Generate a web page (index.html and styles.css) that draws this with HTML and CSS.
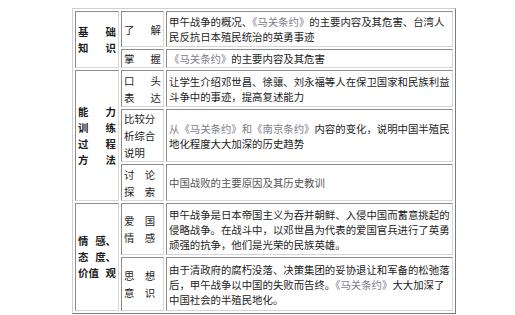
FILE: index.html
```html
<!DOCTYPE html>
<html lang="zh">
<head>
<meta charset="utf-8">
<link rel="stylesheet" href="styles.css">
</head>
<body>
<table class="plan">
  <tr class="r1">
    <td class="c1" rowspan="2"><div class="lbl"><span>基</span><span>础</span></div><div class="lbl"><span>知</span><span>识</span></div></td>
    <td class="c2"><div class="lbl"><span>了</span><span>解</span></div></td>
    <td class="c3">甲午战争的概况、<span class="g">《马关条约》</span>的主要内容及其危害、台湾人民反抗日本殖民统治的英勇事迹</td>
  </tr>
  <tr class="r2">
    <td class="c2"><div class="lbl"><span>掌</span><span>握</span></div></td>
    <td class="c3"><span class="g">《马关条约》</span>的主要内容及其危害</td>
  </tr>
  <tr class="r3 grp">
    <td class="c1" rowspan="3"><div class="lbl"><span>能</span><span>力</span></div><div class="lbl"><span>训</span><span>练</span></div><div class="lbl"><span>过</span><span>程</span></div><div class="lbl"><span>方</span><span>法</span></div></td>
    <td class="c2"><div class="lbl"><span>口</span><span>头</span></div><div class="lbl"><span>表</span><span>达</span></div></td>
    <td class="c3">让学生介绍邓世昌、徐骧、刘永福等人在保卫国家和民族利益斗争中的事迹，提高复述能力</td>
  </tr>
  <tr class="r4">
    <td class="c2">比较分<br>析综合<br>说明</td>
    <td class="c3"><span class="g">从《马关条约》和《南京条约》</span>内容的变化，说明中国半殖民地化程度大大加深的历史趋势</td>
  </tr>
  <tr class="r5">
    <td class="c2">讨　论<br>探　索</td>
    <td class="c3 soft">中国战败的主要原因及其历史教训</td>
  </tr>
  <tr class="r6 grp">
    <td class="c1" rowspan="2"><div class="lbl"><span>情</span><span>感、</span></div><div class="lbl"><span>态</span><span>度、</span></div><div class="lbl"><span>价值</span><span>观</span></div></td>
    <td class="c2">爱　国<br>情　感</td>
    <td class="c3">甲午战争是日本帝国主义为吞并朝鲜、入侵中国而蓄意挑起的侵略战争。在战斗中，以邓世昌为代表的爱国官兵进行了英勇顽强的抗争，他们是光荣的民族英雄。</td>
  </tr>
  <tr class="r7">
    <td class="c2">思　想<br>意　识</td>
    <td class="c3">由于清政府的腐朽没落、决策集团的妥协退让和军备的松弛落后，甲午战争以中国的失败而告终。<span class="g">《马关条约》</span>大大加深了中国社会的半殖民地化。</td>
  </tr>
</table>
</body>
</html>
```
FILE: styles.css
```css
html, body {
  margin: 0;
  padding: 0;
  background: #fff;
}
body {
  padding: 8px 0 0 72px;
  font-family: "Noto Sans CJK SC", "Noto Sans", sans-serif;
  font-size: 10.4px;
  color: #1c1c1c;
}
.plan {
  border-collapse: separate;
  border-spacing: 2px;
  border: 1px solid;
  border-color: #cfcfcf #7c7c7c #7c7c7c #cfcfcf;
  table-layout: fixed;
}
.plan td {
  border: 1px solid;
  border-color: #8c8c8c #d6d6d6 #d6d6d6 #8c8c8c;
  padding: 0 2px;
  vertical-align: middle;
  line-height: 15px;
  box-sizing: border-box;
}
.c1 {
  width: 44px;
  font-weight: bold;
  line-height: 16px;
}
.plan td.c1 { line-height: 16px; }
.plan td.c2 { width: 43px; line-height: 17px; }
.c3 {
  width: 287px;
  word-break: break-all;
}
.lbl {
  display: flex;
  justify-content: space-between;
}
.g { color: #7d7d8a; }
.soft { color: #555; }
.r1 { height: 36px; }
.r2 { height: 17px; }
.r3 { height: 37px; }
.r4 { height: 53px; }
.r5 { height: 37px; }
.r6 { height: 52px; }
.r7 { height: 54px; }
```
